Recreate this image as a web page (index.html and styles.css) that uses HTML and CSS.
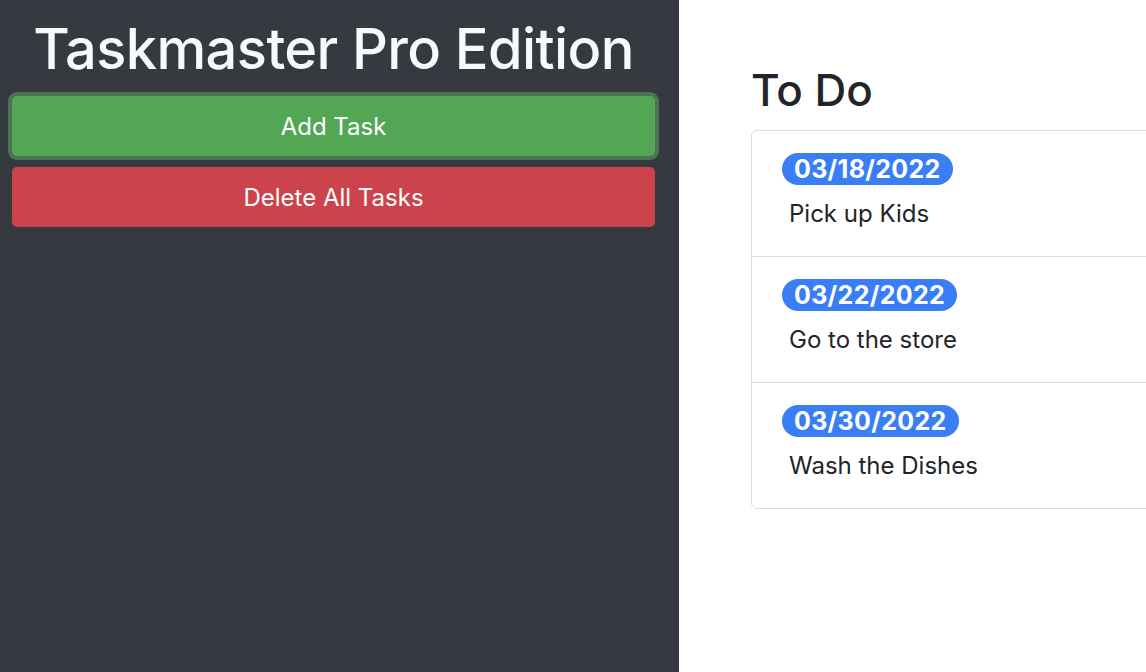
FILE: index.html
```html
<!DOCTYPE html>
<html>
<head>
<meta charset="utf-8">
<link rel="stylesheet" href="styles.css">
</head>
<body>
<div class="layout">
  <aside class="sidebar">
    <h1 class="title">Taskmaster Pro Edition</h1>
    <button class="btn btn-add">Add Task</button>
    <button class="btn btn-delete">Delete All Tasks</button>
  </aside>
  <main class="main">
    <h2 class="heading">To Do</h2>
    <ul class="list">
      <li class="item">
        <span class="badge">03/18/2022</span>
        <p class="task">Pick up Kids</p>
      </li>
      <li class="item">
        <span class="badge">03/22/2022</span>
        <p class="task">Go to the store</p>
      </li>
      <li class="item">
        <span class="badge">03/30/2022</span>
        <p class="task">Wash the Dishes</p>
      </li>
    </ul>
  </main>
</div>
</body>
</html>
```
FILE: styles.css
```css
html, body {
  margin: 0;
  padding: 0;
  height: 100%;
}
body {
  font-family: Inter, "Noto Sans", sans-serif;
  color: #212529;
  background: #fff;
}
.layout {
  display: flex;
  height: 100vh;
  overflow: hidden;
}
.sidebar {
  width: 679px;
  flex: none;
  box-sizing: border-box;
  background: #343a40;
  padding: 0 24px 0 12px;
  display: flex;
  flex-direction: column;
}
.title {
  margin: 16px 0 13px;
  font-size: 56px;
  font-weight: 500;
  line-height: 1.2;
  color: #f8f9fa;
  text-align: center;
  letter-spacing: -0.6px;
}
.btn {
  display: block;
  width: 100%;
  height: 60px;
  border: none;
  border-radius: 5px;
  color: #fff;
  font-family: Inter, "Noto Sans", sans-serif;
  font-size: 24px;
  font-weight: 400;
  cursor: pointer;
}
.btn-add {
  background: #53a653;
  box-shadow: 0 0 0 4px #4c7353;
}
.btn-delete {
  margin-top: 11px;
  background: #cc434b;
}
.main {
  flex: 1;
  padding-left: 72px;
  overflow: hidden;
}
.heading {
  margin: 64px 0 13px;
  font-size: 44px;
  font-weight: 500;
  line-height: 1.2;
}
.list {
  list-style: none;
  margin: 0;
  padding: 0;
  width: 600px;
  border: 1px solid #dcdcdc;
  border-radius: 6px;
}
.item {
  height: 126px;
  box-sizing: border-box;
  padding: 22px 30px 0;
  border-top: 1px solid #dcdcdc;
}
.item:first-child {
  border-top: none;
  height: 125px;
}
.badge {
  display: inline-block;
  background: #3a7ef6;
  color: #fff;
  font-weight: 700;
  font-size: 25px;
  line-height: 32px;
  height: 32px;
  padding: 0 12px;
  border-radius: 16px;
  letter-spacing: 0.3px;
}
.task {
  margin: 15px 0 0 7px;
  font-size: 24px;
  line-height: 1.2;
}
```
